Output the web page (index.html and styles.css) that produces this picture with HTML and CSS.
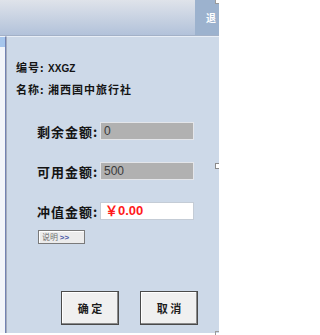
FILE: index.html
```html
<!DOCTYPE html>
<html lang="zh-CN">
<head>
<meta charset="utf-8">
<title>充值</title>
<link rel="stylesheet" href="styles.css">
</head>
<body>
<div class="page">
  <div class="header">
    <div class="header-fill"></div>
    <div class="header-tab">退</div>
  </div>
  <div class="main">
    <div class="side">
      <div class="side-top"></div>
    </div>
    <div class="panel">
      <div class="info">
        <div class="info-line">编号: <span class="code">XXGZ</span></div>
        <div class="info-line">名称: 湘西国中旅行社</div>
      </div>
      <div class="form">
        <div class="row">
          <span class="label">剩余金额:</span>
          <span class="field field-ro">0</span>
        </div>
        <div class="row">
          <span class="label">可用金额:</span>
          <span class="field field-ro">500</span>
        </div>
        <div class="row">
          <span class="label">冲值金额:</span>
          <span class="field field-edit">￥0.00</span>
        </div>
        <div class="help"><span class="help-btn">说明 <span class="arrows">&gt;&gt;</span></span></div>
      </div>
      <div class="actions">
        <span class="btn">确 定</span>
        <span class="btn">取 消</span>
      </div>
    </div>
  </div>
  <div class="bottom"></div>
  <div class="corner-top"></div>
  <div class="edge-box"></div>
  <div class="corner-bottom"></div>
</div>
</body>
</html>
```

FILE: styles.css
```css
html, body {
  margin: 0;
  padding: 0;
  background: #ffffff;
}
.page {
  position: relative;
  width: 219px;
  height: 335px;
  overflow: hidden;
  font-family: "Noto Sans CJK SC", "Liberation Sans", sans-serif;
  color: #141414;
}
.header {
  display: flex;
  height: 35px;
  border-bottom: 1px solid #a3b1c7;
}
.header-fill {
  flex: 1;
  background: linear-gradient(#dfe3ea, #b2c2da);
}
.header-tab {
  width: 24px;
  box-sizing: border-box;
  padding-left: 11px;
  background: #9cb2ce;
  color: #ffffff;
  font-weight: bold;
  font-size: 10px;
  line-height: 35px;
  white-space: nowrap;
  overflow: hidden;
}
.main {
  display: flex;
  height: 297px;
}
.side {
  width: 5px;
  background: #f2f5fa;
  border-right: 1px solid #7282b2;
  border-top: 1px solid #eef2f8;
}
.side-top {
  height: 10px;
  background: #a6c6ec;
}
.panel {
  flex: 1;
  background: #cdd9e8;
  border-top: 1px solid #e8eef6;
  border-left: 1px solid #a4acbc;
  padding-top: 20px;
  padding-left: 9px;
}
.info-line {
  font-size: 11px;
  font-weight: bold;
  line-height: 20px;
  letter-spacing: 1px;
  white-space: nowrap;
}
.code {
  font-family: "Liberation Sans", sans-serif;
  font-size: 10px;
  letter-spacing: 0;
}
.form {
  margin-top: 23px;
  padding-left: 21px;
  display: flex;
  flex-direction: column;
  gap: 22px;
}
.row {
  display: flex;
  align-items: center;
  height: 18px;
}
.label {
  width: 63px;
  font-size: 13px;
  font-weight: bold;
  letter-spacing: 1px;
  white-space: nowrap;
}
.field {
  box-sizing: border-box;
  width: 94px;
  height: 18px;
  padding-left: 3px;
  font-family: "Liberation Sans", sans-serif;
  font-size: 12px;
  line-height: 16px;
}
.field-ro {
  background: #b1b1b1;
  border: 1px solid #e4e6ea;
  color: #3a3a3a;
}
.field-edit {
  background: #ffffff;
  border: 1px solid #c4ccd6;
  color: #ff1a1a;
  font-weight: bold;
  font-size: 13px;
  padding-left: 4px;
}
.help {
  margin-top: -12px;
  display: flex;
}
.help-btn {
  box-sizing: border-box;
  height: 14px;
  width: 47px;
  margin-left: 1px;
  border: 1px solid #7a7a7a;
  background: #ececec;
  box-shadow: inset 1px 1px 0 #ffffff;
  color: #707070;
  font-size: 8px;
  line-height: 12px;
  padding-left: 3px;
  white-space: nowrap;
}
.arrows {
  font-family: "Liberation Sans", sans-serif;
  color: #4a5aa8;
  font-weight: bold;
}
.actions {
  margin-top: 47px;
  padding-left: 45px;
  display: flex;
  gap: 21px;
}
.btn {
  box-sizing: border-box;
  width: 58px;
  height: 34px;
  border: 1px solid #4a4a4a;
  box-shadow: inset -1px -1px 0 #8a8a8a, inset 1px 1px 0 #ffffff;
  background: #f0f0f0;
  font-size: 11px;
  font-weight: bold;
  line-height: 32px;
  text-align: center;
  white-space: pre;
  color: #1c1c1c;
}
.bottom {
  height: 2px;
  background: #ffffff;
}
.corner-top {
  position: absolute;
  top: 0;
  right: 0;
  width: 3px;
  height: 3px;
  background: #ffffff;
  border-left: 1px solid #9a9a9a;
  border-bottom: 1px solid #9a9a9a;
}
.edge-box {
  position: absolute;
  top: 163px;
  right: 0;
  width: 3px;
  height: 4px;
  background: #ffffff;
  border: 1px solid #8a8a8a;
  border-right: none;
}
.corner-bottom {
  position: absolute;
  top: 331px;
  right: 0;
  width: 3px;
  height: 4px;
  border-left: 1px solid #9a9a9a;
  border-top: 1px solid #9a9a9a;
}
```
